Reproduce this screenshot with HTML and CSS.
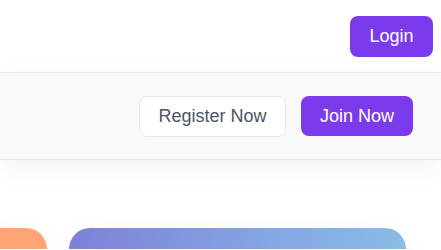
FILE: index.html
```
<html>
<head>
    <title>Home</title>
    <meta http-equiv="Content-Type" content="text/html;charset=UTF-8"/>
    <link rel="stylesheet" href="styles.css">
</head>
<body>
<div class="top-header">
    <button class="btn btn-primary login-btn">Login</button>
</div>
<div class="action-bar">
    <button class="btn btn-outline">Register Now</button>
    <button class="btn btn-primary">Join Now</button>
</div>
<div class="card-strip">
    <div class="card-track">
        <div class="promo-card card-orange"></div>
        <div class="promo-card card-blue"></div>
    </div>
</div>
</body>
</html>
```

FILE: styles.css
```
html, body {
    height: 250px;
    overflow: hidden;
}

body {
    margin: 0;
    background-color: #fff;
    font-family: "Liberation Sans", Arial, sans-serif;
}

.top-header {
    height: 72px;
    display: flex;
    align-items: center;
    justify-content: flex-end;
    padding-right: 8px;
    border-bottom: 1px solid #eceef2;
    background-color: #fff;
}

.btn {
    font-family: inherit;
    font-size: 18px;
    height: 41px;
    padding: 0;
    border-radius: 8px;
    white-space: nowrap;
    box-sizing: border-box;
    cursor: pointer;
}

.btn-primary {
    background-color: #7c3aed;
    color: #fff;
    border: none;
}

.btn-outline {
    background-color: #fff;
    color: #4b5563;
    border: 1px solid #e5e7eb;
}

.login-btn {
    width: 83px;
}

.action-bar {
    height: 86px;
    display: flex;
    align-items: center;
    justify-content: flex-end;
    gap: 15px;
    padding-right: 28px;
    background-color: #f8f9fb;
    border-bottom: 1px solid #e5e7eb;
    box-shadow: 0 8px 30px rgba(0, 0, 0, 0.05);
    position: relative;
}

.action-bar .btn-outline {
    width: 147px;
}

.action-bar .btn-primary {
    width: 112px;
    height: 40px;
}

.card-strip {
    padding-top: 68px;
    padding-bottom: 30px;
}

.card-track {
    display: flex;
    gap: 22px;
    margin-left: -290px;
}

.promo-card {
    flex: 0 0 337px;
    height: 21px;
    border-radius: 22px 22px 0 0;
    box-shadow: 0 10px 30px rgba(0, 0, 0, 0.07);
}

.card-orange {
    background: linear-gradient(to right, #ff9e78, #ffa472);
}

.card-blue {
    background: linear-gradient(100deg, #7e80d6, #86a6e4 60%, #89bde6);
}
```
